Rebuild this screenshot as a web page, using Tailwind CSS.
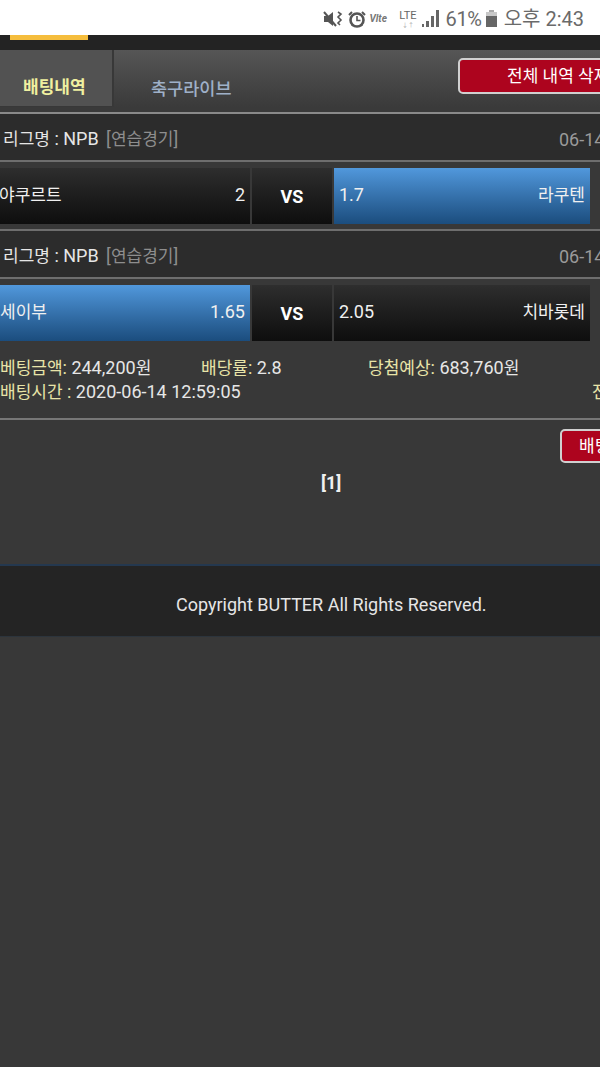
<!DOCTYPE html>
<html lang="ko">
<head>
  <meta charset="UTF-8" />
  <meta name="viewport" content="width=device-width, initial-scale=1.0"/>
  <title>배팅내역</title>
  <script src="https://cdn.jsdelivr.net/npm/@tailwindcss/browser@4"></script>
</head>
<body class="bg-[#383838] font-['Roboto','Noto_Sans_CJK_KR',sans-serif] overflow-hidden">
<div class="w-[600px] h-[1067px] overflow-hidden flex flex-col">

  <!-- status bar -->
  <div class="h-[35px] bg-white flex items-center justify-end pr-[16px] pt-[2px] text-[#6a6a6a] shrink-0">
    <svg class="w-[20px] h-[18px] mr-[5px]" viewBox="0 0 20 18" fill="#555"><path d="M1 6h4l5-4v14l-5-4H1z"/><path d="M1 2l12 14" stroke="#555" stroke-width="2"/><path d="M15 2l3 2-3 3 3 3-3 3 2 2" fill="none" stroke="#555" stroke-width="1.6"/></svg>
    <svg class="w-[18px] h-[18px] mr-[3px]" viewBox="0 0 18 18"><circle cx="9" cy="10" r="6.5" fill="none" stroke="#555" stroke-width="2.6"/><path d="M9 6v4.500h3.500" fill="none" stroke="#555" stroke-width="1.6"/><path d="M1 5l3-3M17 5l-3-3M4 16l1-1.500M14 16l-1-1.500" stroke="#555" stroke-width="2"/></svg>
    <span class="w-[23px] mr-[6px] text-[10px] font-bold italic leading-none text-[#777] whitespace-nowrap">Vlte</span>
    <div class="flex flex-col items-center mr-[5px] w-[19px]">
      <span class="text-[11px] leading-[11px] text-[#666]">LTE</span>
      <span class="text-[6px] leading-[7px] text-[#aaa]">↓↑</span>
    </div>
    <svg class="w-[18px] h-[17px] mr-[5px]" viewBox="0 0 18 17" fill="#666"><rect x="0" y="14" width="2" height="3"/><rect x="4" y="11" width="3" height="6"/><rect x="9" y="6" width="3" height="11"/><rect x="14" y="0" width="3" height="17"/></svg>
    <span class="text-[20px] leading-none mr-[4px] tracking-[-0.3px]">61%</span>
    <svg class="w-[11px] h-[17px] mr-[7px]" viewBox="0 0 11 17"><rect x="3" y="0" width="5" height="2" fill="#aaa"/><rect x="0" y="2" width="11" height="15" fill="#c8c8c8"/><rect x="0" y="6" width="11" height="11" fill="#666"/></svg>
    <span class="text-[20px] leading-none whitespace-nowrap">오후 2:43</span>
  </div>

  <!-- top strip -->
  <div class="h-[15px] bg-[#232323] shrink-0 pl-[10px]">
    <div class="w-[78px] h-[5px] bg-[#f5bd3c]"></div>
  </div>

  <!-- tabs -->
  <div class="h-[57px] shrink-0 flex bg-gradient-to-b from-[#565656] to-[#3a3a3a] relative">
    <div class="w-[114px] bg-[#525252] border-r-2 border-b border-[#383838] flex items-end pl-[23px] pb-[7px]">
      <span class="text-[17px] leading-[24px] font-bold text-[#f0f0a0]">배팅내역</span>
    </div>
    <div class="flex-1 pl-[37px] flex items-end pb-[6px]">
      <span class="text-[17.5px] leading-[24px] font-medium text-[#9fb0c8]">축구라이브</span>
    </div>
    <div class="absolute left-[458px] top-[8px] w-[170px] h-[36px] rounded-[5px] border-2 border-[#d0d0d0] bg-[#ad041e] text-white text-[17px] leading-[32px] pl-[47px] whitespace-nowrap">전체 내역 삭제</div>
  </div>
  <div class="h-[5px] bg-[#3a3a3a] shrink-0"></div>
  <div class="h-[2px] bg-[#8a8a8a] shrink-0"></div>

  <!-- game 1 -->
  <div class="h-[46px] shrink-0 bg-[#2c2c2c] flex items-center justify-between pl-[3px] pt-[4px] text-[18px] whitespace-nowrap">
    <div class="text-[#e6e6e6]"><span class="text-[17px]">리그명</span> : NPB <span class="text-[#8e8e8e] ml-[3px]">[<span class="text-[17px]">연습경기</span>]</span></div>
    <div class="text-[#9a9a9a] w-[41px] overflow-hidden">06-14</div>
  </div>
  <div class="h-[2px] bg-[#6e6e6e] shrink-0"></div>
  <div class="h-[67px] shrink-0 bg-[#383838] pt-[6px] flex text-[18px] text-[#f0f0f0]">
    <div class="w-[250px] h-[56px] bg-gradient-to-b from-[#2e2e2e] to-[#0e0e0e] flex items-center justify-between pr-[5px]">
      <span class="ml-[-1px] text-[17px]">야쿠르트</span><span class="mb-[3px]">2</span>
    </div>
    <div class="w-[80px] h-[56px] ml-[2px] bg-gradient-to-b from-[#2e2e2e] to-[#0e0e0e] flex items-center justify-center text-[18px] font-bold text-white">VS</div>
    <div class="w-[256px] h-[56px] ml-[2px] bg-gradient-to-b from-[#5198dc] to-[#1b4d7e] flex items-center justify-between px-[5px]">
      <span class="mb-[3px]">1.7</span><span class="text-[17px]">라쿠텐</span>
    </div>
  </div>
  <div class="h-[2px] bg-[#6e6e6e] shrink-0"></div>

  <!-- game 2 -->
  <div class="h-[46px] shrink-0 bg-[#2c2c2c] flex items-center justify-between pl-[3px] pt-[4px] text-[18px] whitespace-nowrap">
    <div class="text-[#e6e6e6]"><span class="text-[17px]">리그명</span> : NPB <span class="text-[#8e8e8e] ml-[3px]">[<span class="text-[17px]">연습경기</span>]</span></div>
    <div class="text-[#9a9a9a] w-[41px] overflow-hidden">06-14</div>
  </div>
  <div class="h-[2px] bg-[#6e6e6e] shrink-0"></div>
  <div class="h-[62px] shrink-0 bg-[#383838] pt-[6px] flex text-[18px] text-[#f0f0f0]">
    <div class="w-[250px] h-[56px] bg-gradient-to-b from-[#5198dc] to-[#1b4d7e] flex items-center justify-between pr-[5px]">
      <span class="text-[17px]">세이부</span><span class="mb-[3px]">1.65</span>
    </div>
    <div class="w-[80px] h-[56px] ml-[2px] bg-gradient-to-b from-[#2e2e2e] to-[#0e0e0e] flex items-center justify-center text-[18px] font-bold text-white">VS</div>
    <div class="w-[256px] h-[56px] ml-[2px] bg-gradient-to-b from-[#2e2e2e] to-[#0e0e0e] flex items-center justify-between px-[5px]">
      <span class="mb-[3px]">2.05</span><span class="text-[17px]">치바롯데</span>
    </div>
  </div>

  <!-- bet info -->
  <div class="h-[77px] shrink-0 pt-[15px] text-[18px] leading-[24px] text-[#e6e6e6] whitespace-nowrap">
    <div class="flex">
      <div class="w-[201px]"><span class="text-[#e8e4a8]"><span class="text-[17px]">베팅금액</span>:</span> 244,200<span class="text-[17px]">원</span></div>
      <div class="w-[167px]"><span class="text-[#e8e4a8]"><span class="text-[17px]">배당률</span>:</span> 2.8</div>
      <div><span class="text-[#e8e4a8]"><span class="text-[17px]">당첨예상</span>:</span> 683,760<span class="text-[17px]">원</span></div>
    </div>
    <div class="flex justify-between">
      <div><span class="text-[#e8e4a8]"><span class="text-[17px]">배팅시간</span> :</span> 2020-06-14 12:59:05</div>
      <div class="w-[8px] overflow-hidden text-[#e8e4a8] text-[17px]">전</div>
    </div>
  </div>
  <div class="h-[2px] bg-[#777] shrink-0"></div>

  <!-- delete button -->
  <div class="h-[144px] shrink-0 relative">
    <div class="absolute left-[560px] top-[9px] w-[80px] h-[34px] rounded-[5px] border-2 border-[#d0d0d0] bg-[#ad041e] text-white text-[17px] leading-[30px] pl-[17px] whitespace-nowrap">배팅</div>
    <div class="absolute left-[321px] top-[51px] text-[18px] leading-[24px] font-bold text-[#f0f0f0]">[1]</div>
  </div>

  <!-- footer -->
  <div class="h-[73px] shrink-0 bg-[#242424] border-t-2 border-b border-t-[#24384f] border-b-[#2c343c] flex items-center pl-[176px] pt-[6px] text-[18px] text-[#e6e6e6]">
    Copyright BUTTER All Rights Reserved.
  </div>
</div>
</body>
</html>
